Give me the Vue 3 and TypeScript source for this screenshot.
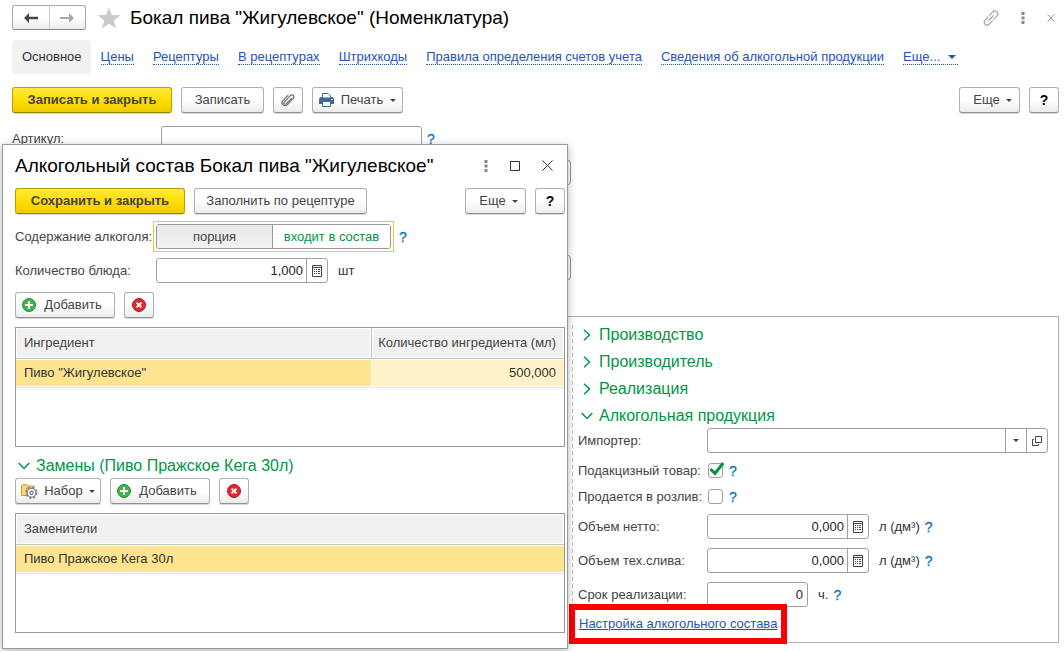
<script setup lang="ts">
import { ref } from 'vue'

const tabs: string[] = [
  'Цены',
  'Рецептуры',
  'В рецептурах',
  'Штрихкоды',
  'Правила определения счетов учета',
  'Сведения об алкогольной продукции',
]
const sections: string[] = ['Производство', 'Производитель', 'Реализация']

const article = ref('')
const importer = ref('')
const excise = ref(true)
const draught = ref(false)
const netVolume = ref('0,000')
const drainVolume = ref('0,000')
const shelfLife = ref('0')
const content = ref<'portion' | 'included'>('included')
const dishAmount = ref('1,000')
</script>

<template>
  <svg class="sprite" aria-hidden="true">
    <symbol id="i-calc" viewBox="0 0 10 12">
      <path d="M.5.5h9v11h-9zM.5 2.500h9" fill="none" stroke="#444" />
      <path d="M2 4h1v1H2zM4 4h1v1H4zM6 4h2v1H6zM2 6h1v1H2zM4 6h1v1H4zM6 6h2v1H6zM2 8h1v1H2zM4 8h1v1H4zM6 8h2v1H6z" fill="#444" />
    </symbol>
    <symbol id="i-add" viewBox="0 0 14 14">
      <circle cx="7" cy="7" r="6.5" fill="#42b350" stroke="#25883a" />
      <path d="M7 3.200v7.600M3.200 7h7.600" stroke="#fff" stroke-width="2" />
    </symbol>
    <symbol id="i-del" viewBox="0 0 14 14">
      <circle cx="7" cy="7" r="6.5" fill="#dc2a30" stroke="#b5161c" />
      <path d="M4.600 4.600l4.800 4.800M9.400 4.600L4.600 9.400" stroke="#fff" stroke-width="2" />
    </symbol>
    <symbol id="i-down" viewBox="0 0 6 3">
      <path d="M0 0h6L3 3z" fill="#444" />
    </symbol>
    <symbol id="i-dots" viewBox="0 0 4 12">
      <path d="M.5 0h3v3h-3zM.5 4.500h3v3h-3zM.5 9h3v3h-3z" fill="currentColor" />
    </symbol>
    <symbol id="i-open" viewBox="0 0 12 8">
      <path d="M.7 1l5.300 5.500L11.300 1" fill="none" stroke="#009646" stroke-width="1.500" />
    </symbol>
    <symbol id="i-closed" viewBox="0 0 8 12">
      <path d="M1 .7L6.500 6 1 11.300" fill="none" stroke="#009646" stroke-width="1.500" />
    </symbol>
  </svg>

  <main class="page">
    <header class="titlebar">
      <div class="history">
        <button type="button" aria-label="Назад">
          <svg width="14" height="10" viewBox="0 0 14 10"><path d="M0 5l5-5v3.700h9v2.600H5V10z" fill="#444" /></svg>
        </button>
        <button type="button" aria-label="Вперед">
          <svg width="14" height="10" viewBox="0 0 14 10"><path d="M14 5L9 0v4H0v2h9v4z" fill="#a8a8a8" /></svg>
        </button>
      </div>
      <svg class="star" width="24" height="22" viewBox="0 0 24 22">
        <path d="M12 0l2.900 7.900 8.600.3-6.800 5.200 2.400 8.200L12 16.800l-7.100 4.800 2.400-8.200L.5 8.200l8.600-.3z" fill="#c9cbcd" />
      </svg>
      <h1>Бокал пива "Жигулевское" (Номенклатура)</h1>
      <div class="window-tools">
        <svg width="16" height="16" viewBox="0 0 16 16" fill="none" stroke="#a0a0a0" stroke-width="1.200">
          <path d="M6.200 5.600l3.600-3.700a2.700 2.700 0 0 1 4.200 0 2.700 2.700 0 0 1 0 4l-3.400 3.500M9.800 10.400l-3.600 3.700a2.700 2.700 0 0 1-4.200 0 2.700 2.700 0 0 1 0-4l3.400-3.500M5.500 10.500l5-5" />
        </svg>
        <svg class="dots" width="4" height="12"><use href="#i-dots" /></svg>
        <svg width="8" height="8" viewBox="0 0 8 8"><path d="M.5.5l7 7M7.500.5l-7 7" stroke="#999" /></svg>
      </div>
    </header>

    <nav class="tabs">
      <span class="current">Основное</span>
      <a v-for="tab in tabs" :key="tab" href="#">{{ tab }}</a>
      <a href="#" class="more">Еще...<svg width="8" height="4" viewBox="0 0 8 4"><path d="M0 0h8L4 4z" fill="#1f53b8" /></svg></a>
    </nav>

    <div class="commands">
      <button type="button" class="btn primary main-save">Записать и закрыть</button>
      <button type="button" class="btn save">Записать</button>
      <button type="button" class="btn square" aria-label="Файлы">
        <svg width="14" height="14" viewBox="0 0 14 14" fill="none" stroke="#666" stroke-width="1.100">
          <path d="M10.700 5.200l-5.300 5.400c-1.700 1.500-3.400-.2-2-1.800l6-6.200c2-1.900 4.700.6 2.900 2.700l-6.200 6.500c-2.600 2.500-6.900-.8-4.300-4.100l5.400-5.600" />
        </svg>
      </button>
      <button type="button" class="btn print">
        <svg width="15" height="14" viewBox="0 0 15 14">
          <path d="M0 5.500L1.500 4h12L15 5.500V11H0z" fill="#3f6b94" />
          <path d="M3.500 5V.5h5.500l2.500 2.500v2z" fill="#fff" stroke="#3f6b94" />
          <path d="M3.500 8.500h8v5h-8z" fill="#fff" stroke="#3f6b94" />
          <path d="M12 6h1.500v1H12z" fill="#fff" />
        </svg>
        Печать
        <svg width="6" height="3"><use href="#i-down" /></svg>
      </button>
      <button type="button" class="btn more-btn push">Еще <svg width="6" height="3"><use href="#i-down" /></svg></button>
      <button type="button" class="btn square help-btn">?</button>
    </div>

    <section class="form">
      <div class="form-row">
        <label for="article">Артикул:</label>
        <input id="article" v-model="article" type="text" class="field article" />
        <a href="#" class="hint">?</a>
      </div>
      <div class="covered" aria-hidden="true"></div>
      <div class="covered second" aria-hidden="true"></div>
    </section>

    <section class="frame">
      <div class="pane">
        <h2 v-for="section in sections" :key="section" class="group">
          <svg width="12" height="12"><use href="#i-closed" width="8" height="12" x="2" /></svg>{{ section }}
        </h2>
        <h2 class="group">
          <svg width="12" height="8"><use href="#i-open" /></svg>Алкогольная продукция
        </h2>
        <div class="row">
          <label for="importer">Импортер:</label>
          <div class="combo wide">
            <input id="importer" v-model="importer" type="text" />
            <button type="button" aria-label="Выбрать"><svg width="6" height="3"><use href="#i-down" /></svg></button>
            <button type="button" aria-label="Открыть">
              <svg width="10" height="10" viewBox="0 0 10 10" fill="none" stroke="#444"><path d="M3.500.5h6v6h-6zM2 3.500H.5v6h6V8" /></svg>
            </button>
          </div>
        </div>
        <div class="row check-row">
          <label for="excise">Подакцизный товар:</label>
          <span class="check">
            <input id="excise" v-model="excise" type="checkbox" />
            <svg v-if="excise" width="16" height="14" viewBox="0 0 16 14"><path d="M1.500 7L6 11.500 14.200 1" fill="none" stroke="#009646" stroke-width="3" /></svg>
          </span>
          <a href="#" class="hint">?</a>
        </div>
        <div class="row check-row">
          <label for="draught">Продается в розлив:</label>
          <span class="check"><input id="draught" v-model="draught" type="checkbox" /></span>
          <a href="#" class="hint">?</a>
        </div>
        <div class="row">
          <label for="net">Объем нетто:</label>
          <div class="combo number">
            <input id="net" v-model="netVolume" type="text" />
            <button type="button" aria-label="Калькулятор"><svg width="10" height="12"><use href="#i-calc" /></svg></button>
          </div>
          <span class="unit">л (дм³)</span>
          <a href="#" class="hint">?</a>
        </div>
        <div class="row">
          <label for="drain">Объем тех.слива:</label>
          <div class="combo number">
            <input id="drain" v-model="drainVolume" type="text" />
            <button type="button" aria-label="Калькулятор"><svg width="10" height="12"><use href="#i-calc" /></svg></button>
          </div>
          <span class="unit">л (дм³)</span>
          <a href="#" class="hint">?</a>
        </div>
        <div class="row last">
          <label for="shelf">Срок реализации:</label>
          <input id="shelf" v-model="shelfLife" type="text" class="field hours" />
          <span class="unit">ч.</span>
          <a href="#" class="hint">?</a>
        </div>
        <a href="#" class="setup">Настройка алкогольного состава</a>
      </div>
    </section>

    <div class="dialog" role="dialog" aria-labelledby="dialog-title">
      <header class="dialog-title">
        <h1 id="dialog-title">Алкогольный состав Бокал пива "Жигулевское"</h1>
        <div class="dialog-tools">
          <svg class="dots" width="4" height="12"><use href="#i-dots" /></svg>
          <svg width="10" height="10" viewBox="0 0 10 10"><path d="M.5.5h9v9h-9z" fill="none" stroke="#333" /></svg>
          <svg width="11" height="11" viewBox="0 0 11 11"><path d="M.5.5l10 10M10.500.5l-10 10" stroke="#333" /></svg>
        </div>
      </header>
      <div class="commands">
        <button type="button" class="btn primary dialog-save">Сохранить и закрыть</button>
        <button type="button" class="btn fill">Заполнить по рецептуре</button>
        <button type="button" class="btn more-btn push">Еще <svg width="6" height="3"><use href="#i-down" /></svg></button>
        <button type="button" class="btn square help-btn">?</button>
      </div>
      <div class="drow" role="radiogroup" aria-labelledby="content-label">
        <span id="content-label" class="dlabel">Содержание алкоголя:</span>
        <div class="focus">
          <div class="segments">
            <label :class="{ on: content === 'portion' }"><input v-model="content" type="radio" name="content" value="portion" />порция</label>
            <label :class="{ on: content === 'included' }"><input v-model="content" type="radio" name="content" value="included" />входит в состав</label>
          </div>
        </div>
        <a href="#" class="hint">?</a>
      </div>
      <div class="drow amount">
        <label for="amount" class="dlabel">Количество блюда:</label>
        <div class="combo dish">
          <input id="amount" v-model="dishAmount" type="text" />
          <button type="button" aria-label="Калькулятор"><svg width="10" height="12"><use href="#i-calc" /></svg></button>
        </div>
        <span class="unit">шт</span>
      </div>
      <div class="commands list-commands">
        <button type="button" class="btn add"><svg width="14" height="14"><use href="#i-add" /></svg>Добавить</button>
        <button type="button" class="btn square" aria-label="Удалить"><svg width="14" height="14"><use href="#i-del" /></svg></button>
      </div>
      <div class="grid">
        <table>
          <thead><tr><th>Ингредиент</th><th class="qty">Количество ингредиента (мл)</th></tr></thead>
          <tbody><tr><td>Пиво "Жигулевское"</td><td class="qty">500,000</td></tr></tbody>
        </table>
      </div>
      <h2 class="group swaps">
        <svg width="12" height="8"><use href="#i-open" /></svg>Замены (Пиво Пражское Кега 30л)
      </h2>
      <div class="commands">
        <button type="button" class="btn set">
          <svg width="17" height="16" viewBox="0 0 17 16">
            <path d="M.5 12.500v-10l1-1h4l1 1.500h6.500v3M.5 12.500h5V5h8" fill="#fbd777" stroke="#d29a2e" />
            <circle cx="10.500" cy="9.800" r="4.300" fill="#fff" stroke="#7d8894" stroke-width="1.200" />
            <circle cx="10.500" cy="9.800" r="5.300" fill="none" stroke="#7d8894" stroke-width="1.800" stroke-dasharray="2.080" />
            <circle cx="10.500" cy="9.800" r="1.600" fill="#fff" stroke="#6a7480" stroke-width="1.200" />
          </svg>
          Набор
          <svg width="6" height="3"><use href="#i-down" /></svg>
        </button>
        <button type="button" class="btn add"><svg width="14" height="14"><use href="#i-add" /></svg>Добавить</button>
        <button type="button" class="btn square" aria-label="Удалить"><svg width="14" height="14"><use href="#i-del" /></svg></button>
      </div>
      <div class="grid">
        <table>
          <thead><tr><th>Заменители</th></tr></thead>
          <tbody><tr><td>Пиво Пражское Кега 30л</td></tr></tbody>
        </table>
      </div>
    </div>
  </main>
</template>

<style>
body {
  background: #fff;
}
</style>

<style scoped>
* {
  box-sizing: border-box;
}
.sprite {
  position: absolute;
  width: 0;
  height: 0;
}
svg {
  flex: none;
  display: block;
}
.page {
  position: relative;
  padding: 5px 5px 8px 12px;
  font: 13px/16px "Liberation Sans", Arial, sans-serif;
  color: #444;
}
button,
input {
  font: inherit;
  color: inherit;
  margin: 0;
}
h1 {
  margin: 0;
  font-size: 19px;
  line-height: 24px;
  font-weight: normal;
  color: #000;
  white-space: nowrap;
}
.titlebar {
  display: flex;
  align-items: center;
  height: 25px;
}
.history {
  display: flex;
  width: 74px;
  height: 25px;
  border: 1px solid #aaa;
  border-bottom-color: #888;
  border-radius: 3px;
  background: linear-gradient(#fff 50%, #ececec);
}
.history button {
  flex: 1;
  display: flex;
  align-items: center;
  justify-content: center;
  padding: 0;
  border: 0;
  background: none;
}
.history button + button {
  border-left: 1px solid #ccc;
}
.star {
  margin: 0 9px 0 11px;
}
.window-tools {
  display: flex;
  align-items: center;
  gap: 22px;
  margin-left: auto;
  padding-right: 4px;
}
.dots {
  color: #888;
}
.tabs {
  display: flex;
  align-items: center;
  gap: 19px;
  height: 34px;
  margin-top: 10px;
  white-space: nowrap;
}
.current {
  margin-right: -9px;
  padding: 9px 9px 9px 10px;
  border-radius: 4px;
  background: #f1f1f1;
  color: #333;
}
.tabs a {
  border-bottom: 1px dotted #1f53b8;
  color: #1f53b8;
  line-height: 14px;
  text-decoration: none;
}
.tabs .more {
  display: flex;
  align-items: center;
  gap: 8px;
  padding-right: 2px;
}
.commands {
  display: flex;
  gap: 9px;
  height: 26px;
}
.page > .commands {
  margin-top: 13px;
}
.btn {
  display: flex;
  align-items: center;
  justify-content: center;
  height: 26px;
  padding: 0;
  border: 1px solid #b0b0b0;
  border-bottom-color: #919191;
  border-radius: 3px;
  background: linear-gradient(#fff 50%, #ebebeb);
  box-shadow: 0 1px 0 #d8d8d8;
  white-space: nowrap;
}
.primary {
  border-color: #b9a000;
  border-bottom-color: #998400;
  background: linear-gradient(#ffe93c, #ffdd00 55%, #eecb00);
  font-weight: bold;
}
.main-save {
  width: 160px;
}
.dialog-save {
  width: 170px;
}
.save {
  width: 83px;
}
.square {
  width: 30px;
}
.print {
  width: 91px;
  gap: 7px;
}
.more-btn {
  width: 61px;
  gap: 6px;
  padding-left: 6px;
}
.push {
  margin-left: auto;
}
.help-btn {
  color: #000;
  font-size: 14px;
  font-weight: bold;
}
.fill {
  width: 173px;
}
.add {
  width: 100px;
  gap: 8px;
  padding-right: 6px;
}
.set {
  width: 86px;
  gap: 6px;
}
.form {
  height: 190px;
  margin-top: 13px;
}
.form-row {
  display: flex;
  align-items: center;
  height: 25px;
}
.form-row label {
  width: 149px;
}
.field,
.combo {
  height: 25px;
  border: 1px solid #a0a0a0;
  border-radius: 3px;
  background: #fff;
  color: #222;
}
.field {
  padding: 0 4px;
}
.article {
  width: 261px;
}
.hint {
  margin-left: 5px;
  color: #0a76c2;
  font-size: 14px;
  text-decoration: none;
  -webkit-text-stroke: 0.3px #0a76c2;
}
.covered {
  width: 559px;
  height: 25px;
  margin-top: 9px;
  border: 1px solid #a0a0a0;
  border-radius: 3px;
}
.second {
  margin-top: 70px;
}
.frame {
  display: grid;
  grid-template-columns: 559px 1fr;
  border: 1px solid #b0b0b0;
}
.pane {
  grid-column: 2;
  padding: 3px 10px 4px 6px;
  background: repeating-linear-gradient(#ccc 0 4px, #fff 4px 7px) 0 8px / 1px calc(100% - 20px) no-repeat;
}
.group {
  display: flex;
  align-items: center;
  gap: 6px;
  height: 27px;
  margin: 0;
  padding: 2px 0 0 3px;
  font-size: 16px;
  font-weight: normal;
  color: #009646;
  white-space: nowrap;
}
.row {
  display: flex;
  align-items: center;
  height: 25px;
  margin-bottom: 9px;
}
.row > label {
  flex: none;
  width: 129px;
}
.check-row {
  height: 17px;
}
.last {
  margin-bottom: 3px;
}
.check {
  position: relative;
  width: 17px;
  height: 15px;
}
.check input {
  display: block;
  appearance: none;
  width: 15px;
  height: 15px;
  margin-left: 1px;
  border: 1px solid #a0a0a0;
  border-radius: 3px;
  background: #fff;
}
.check svg {
  position: absolute;
  left: 2px;
  top: -1px;
  pointer-events: none;
}
.combo {
  display: flex;
  overflow: hidden;
}
.combo input {
  flex: 1;
  min-width: 0;
  padding: 0 3px;
  border: 0;
  background: none;
}
.combo button {
  display: flex;
  align-items: center;
  justify-content: center;
  width: 21px;
  padding: 0;
  border: 0;
  border-left: 1px solid #a0a0a0;
  background: none;
}
.wide {
  flex: 1;
}
.number {
  width: 162px;
}
.dish {
  width: 172px;
}
.number input,
.dish input,
.hours {
  text-align: right;
}
.hours {
  width: 101px;
}
.unit {
  margin-left: 10px;
  color: #333;
}
.setup {
  display: block;
  width: fit-content;
  margin-left: -3px;
  padding: 6px 4px;
  outline: 6px solid #fe0000;
  background: #fff;
  color: #1f53b8;
  text-decoration: underline;
  white-space: nowrap;
}
.dialog {
  position: absolute;
  left: 2px;
  top: 144px;
  width: 566px;
  padding: 8px 2px 15px 12px;
  border: 1px solid #999;
  background: #fff;
  box-shadow: 0 2px 8px rgba(0, 0, 0, 0.3);
}
.dialog-title {
  display: flex;
  align-items: center;
  height: 25px;
  margin-bottom: 10px;
}
.dialog-tools {
  display: flex;
  align-items: center;
  gap: 22px;
  margin-left: auto;
  padding-right: 12px;
}
.drow {
  display: flex;
  align-items: center;
  height: 31px;
  margin-top: 7px;
}
.dlabel {
  flex: none;
  width: 141px;
}
.focus {
  width: 241px;
  height: 31px;
  margin-left: -3px;
  padding: 2px;
  border: 1px solid #f5c72c;
}
.segments {
  display: grid;
  grid-template-columns: 115px 1fr;
  height: 25px;
  border: 1px solid #999;
  border-radius: 3px;
  overflow: hidden;
}
.segments label {
  display: flex;
  align-items: center;
  justify-content: center;
  background: linear-gradient(#e8e8e8, #f2f2f2);
}
.segments .on {
  border-left: 1px solid #999;
  background: #fff;
  color: #009646;
}
.segments input {
  appearance: none;
  width: 0;
  height: 0;
}
.drow.amount {
  height: 25px;
  margin-top: 6px;
}
.list-commands {
  margin-top: 9px;
}
.grid {
  height: 120px;
  margin-top: 9px;
  border: 1px solid #999;
}
table {
  width: 100%;
  border-collapse: separate;
  border-spacing: 0;
}
th,
td {
  padding: 0 8px;
  text-align: left;
  font-weight: normal;
  white-space: nowrap;
  background-clip: padding-box;
}
th {
  height: 31px;
  border-bottom: 1px solid #c4c4c4;
  background: #f1f1f1;
  box-shadow: inset 0 0 0 1px #fff;
}
td {
  height: 29px;
  border-bottom: 1px solid #e4e4e4;
  background: #fee48f;
  box-shadow: inset 0 1px 0 #fff, inset 0 -1px 0 #fff;
  color: #333;
}
.qty {
  width: 193px;
  padding-left: 6px;
  text-align: right;
}
th.qty {
  border-left: 1px solid #c4c4c4;
}
td.qty {
  border-left: 1px solid #fff;
  background: #fff2c8;
}
.group.swaps {
  height: 22px;
  margin-top: 8px;
  margin-bottom: 1px;
  padding-top: 0;
}
</style>
